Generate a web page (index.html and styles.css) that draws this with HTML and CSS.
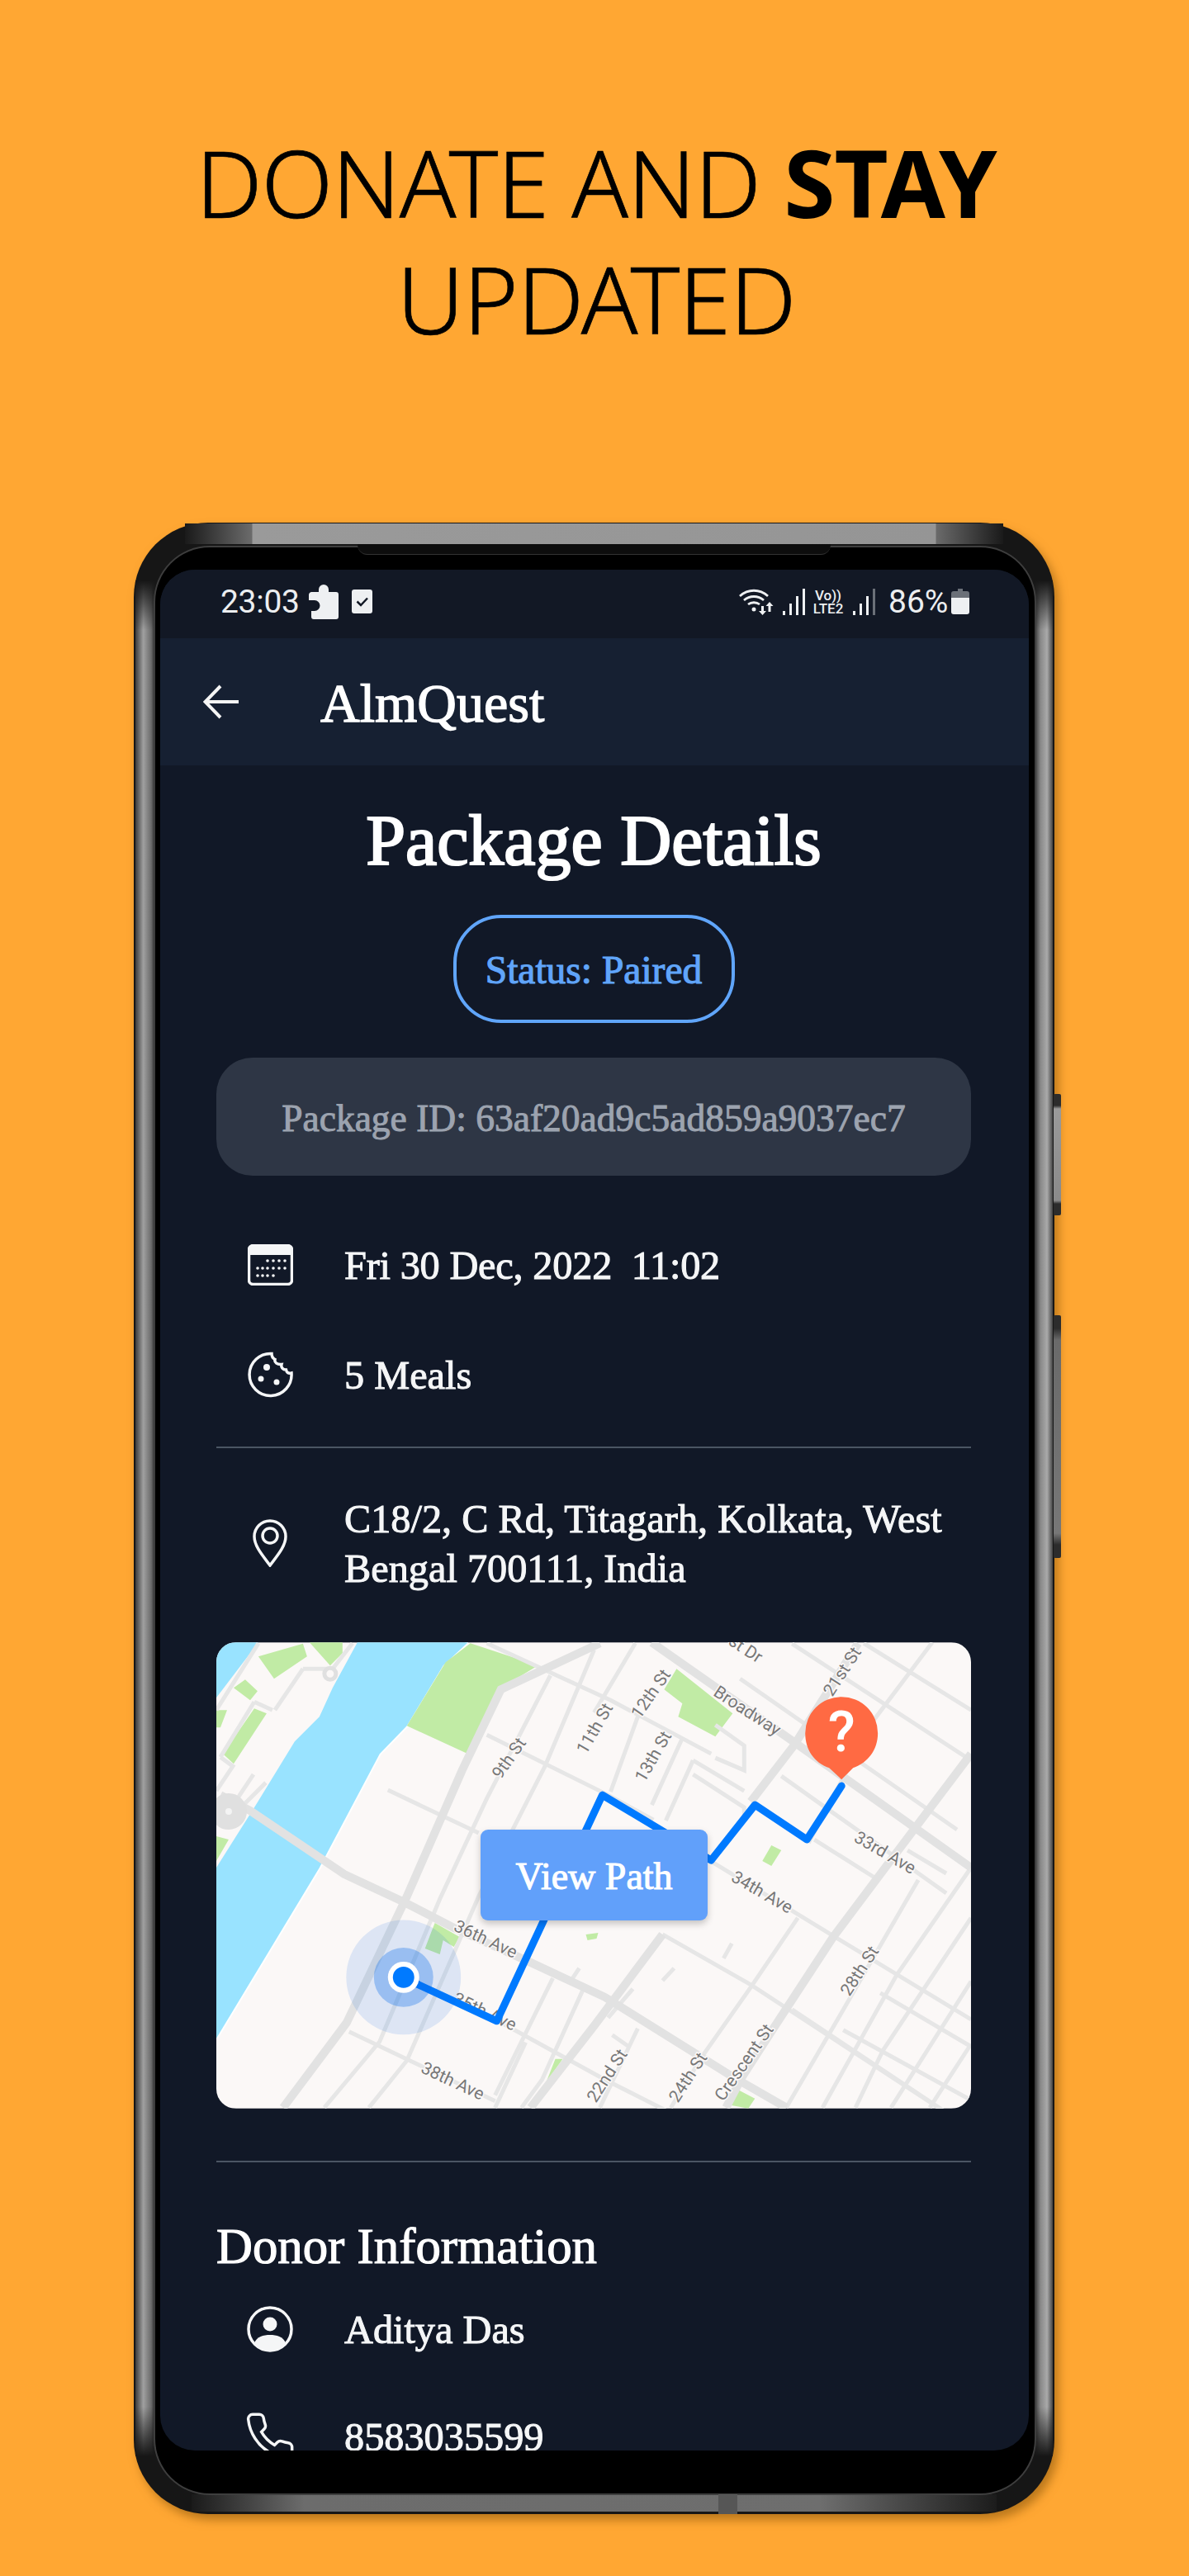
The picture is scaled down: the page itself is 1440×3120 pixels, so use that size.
FILE: index.html
```html
<!DOCTYPE html>
<html lang="en">
<head>
<meta charset="utf-8">
<title>AlmQuest</title>
<link rel="stylesheet" href="styles.css">
</head>
<body>
<header class="hero">
  <h1 class="hero-title">DONATE AND <b>STAY</b><br>UPDATED</h1>
</header>
<div class="phone">
  <span class="band band-top"></span>
  <span class="band band-bottom"></span>
  <span class="band band-left"></span>
  <span class="band band-right"></span>
  <span class="speaker"></span>
  <span class="port"></span>
  <span class="key key-a"></span>
  <span class="key key-b"></span>
  <div class="bezel">
    <div class="screen">
      <div class="statusbar">
        <span class="time">23:03</span>
        <svg class="st-puzzle" viewBox="0 0 36 43"><path d="M3 10H12V7a6 6 0 0 1 12 0V10H33a3 3 0 0 1 3 3V40a3 3 0 0 1-3 3H6a3 3 0 0 1-3-3V33H7a6.500 6.500 0 0 0 0-13H0V14a4 4 0 0 1 3-4z"/></svg>
        <svg class="st-check" viewBox="0 0 25 29"><path d="M3 0H22a3 3 0 0 1 3 3V26a3 3 0 0 1-3 3H3a3 3 0 0 1-3-3V3a3 3 0 0 1 3-3z"/><path class="st-tick" d="M6.500 14.500l4.500 4.500 8-8.500"/></svg>
        <span class="grow"></span>
        <svg class="st-wifi" viewBox="0 0 43 32"><path class="st-line" d="M1 9C11 0 25 0 35 9M6 14C13 8 23 8 30 14M11 19c4-3 10-3 14 0"/><circle class="st-fill" cx="18" cy="25" r="2.500"/><path class="st-fill" d="M27 21h3v6h3l-4.500 5-4.500-5h3zM37 16l4.500 5h-3v7h-3v-7h-3z"/></svg>
        <svg class="st-signal" viewBox="0 0 27 32"><path d="M0 27h3v5H0zM8 18h3v14H8zM16 9h3v23h-3zM24 0h3v32h-3z"/></svg>
        <span class="st-lte"><span>Vo))</span><span>LTE2</span></span>
        <svg class="st-signal st-signal-b" viewBox="0 0 27 32"><path d="M0 27h3v5H0zM8 18h3v14H8zM16 9h3v23h-3z"/><path class="st-dim" d="M24 0h3v32h-3z"/></svg>
        <span class="pct">86%</span>
        <svg class="st-batt" viewBox="0 0 22 31"><path class="st-dim" d="M8 0h6v3h5a3 3 0 0 1 3 3v5H0V6a3 3 0 0 1 3-3h5z"/><path d="M0 11H22V28a3 3 0 0 1-3 3H3a3 3 0 0 1-3-3z"/></svg>
      </div>
      <div class="appbar">
        <svg class="back" viewBox="0 0 44 44"><path d="M43 22H3M21 3L2.500 22 21 41"/></svg>
        <span class="app-title">AlmQuest</span>
      </div>
      <main class="content">
        <h2 class="page-title">Package Details</h2>
        <div class="pill">Status: Paired</div>
        <div class="package-id">Package ID: 63af20ad9c5ad859a9037ec7</div>
        <div class="rows rows-top">
          <div class="row">
            <span class="ico"><svg class="i-cal" viewBox="0 0 55 50"><rect x="1.500" y="1.500" width="52" height="47" rx="5" class="ol"/><path class="so" d="M6 1.500H49a4.500 4.500 0 0 1 4.500 4.500V13H1.500V6A4.500 4.500 0 0 1 6 1.500z"/><g class="so"><circle cx="24" cy="20" r="1.800"/><circle cx="31" cy="20" r="1.800"/><circle cx="38" cy="20" r="1.800"/><circle cx="45" cy="20" r="1.800"/><circle cx="12" cy="29" r="1.800"/><circle cx="18" cy="29" r="1.800"/><circle cx="24" cy="29" r="1.800"/><circle cx="31" cy="29" r="1.800"/><circle cx="38" cy="29" r="1.800"/><circle cx="45" cy="29" r="1.800"/><circle cx="12" cy="38" r="1.800"/><circle cx="18" cy="38" r="1.800"/><circle cx="24" cy="38" r="1.800"/><circle cx="31" cy="38" r="1.800"/></g></svg></span>
            <span class="txt txt-date">Fri 30 Dec, 2022 &nbsp;11:02</span>
          </div>
          <div class="row">
            <span class="ico"><svg class="i-cookie" viewBox="0 0 56 56"><path class="ol" d="M30 2.500a25.500 25.500 0 1 0 24 23.500c-4 1-6-1-6.500-4-4 0-6.500-3-5.500-6.500-5 .5-9-2-8-6-2-1-4-3-4-7z"/><g class="so"><circle cx="24" cy="19" r="4"/><circle cx="17" cy="33" r="3.500"/><circle cx="36" cy="37" r="3.500"/></g></svg></span>
            <span class="txt">5 Meals</span>
          </div>
        </div>
        <hr class="rule rule-a">
        <div class="row row-address">
          <span class="ico"><svg class="i-pin" viewBox="0 0 42 58"><path class="ol" d="M21 56C13 45 2 33 2 21a19 19 0 0 1 38 0C40 33 29 45 21 56z"/><circle class="ol" cx="21" cy="20" r="9"/></svg></span>
          <span class="txt">C18/2, C Rd, Titagarh, Kolkata, West Bengal 700111, India</span>
        </div>
        <div class="map">
          <svg class="map-art" viewBox="0 0 915 565">
            <rect class="m-land" width="915" height="565"/>
            <path class="m-edge" d="M305 0L275 28 231 101 198 135 135 254 125 273 0 480"/>
            <path class="m-water" d="M171 0H305L275 28 231 101 198 135 135 254 125 273 0 480V273L48 197 95 120 125 90 141 55zM0 67L51 0H0z"/>
            <path class="m-park" d="M51 17L105 1.500 110 17 70 44zM113 0H153V13L138 28zM21 55L35 45 50 59 41 70zM46 80L61 86 21 147 8 135zM0 82H13L5 103H0zM0 235L15 239 0 265zM308 1L390 28 345 55 305 135 231 101 278 24zM265 340L295 357 288 369 275 361 271 378 253 371 261 350zM448 354L463 352 461 359 450 361zM411 505H420L400 533zM558 32L626 86 605 114 560 90 565 74 543 57zM673 246L685 252 673 271 662 265zM630 541L653 553 645 565 618 560z"/>
            <path class="m-thin" d="M698 1.500L915 143M785 1L915 82M635 44L898 227M685 162L885 304M725 239L798 285M601 266L745 354 915 457M541 354L648 415 915 590M698 445L915 590M838 252L885 280M868 0L798 93 718 243M915 273L825 403 735 564M915 334L808 495 775 564M851 288L758 449 691 564M915 411L818 564M705 334L648 418 591 499 551 564M915 487L865 564M511 468L465 564M625 365L615 383M555 395L541 410M508 1L458 85M511 90L478 181M565 116L528 197M578 143L545 216M578 143L640 180M578 160L640 200 640 215M605 100L640 125 640 155 605 140M328 112L475 185 530 215M208 179L318 231M328 1L478 70 600 135M161 472L338 556M338 457L471 530 560 575M405 40L328 189 271 311 198 484 131 564M458 9L398 151 318 308 231 507 185 564M408 407L338 549M375 485L338 564M445 420L395 530 370 564M440 395L430 410M51 1L0 82M46 72L5 139M5 139L20 150 0 180M46 72L68 82M105 32L71 82M165 1L141 32M105 32L135 32M60 170L30 200M45 160L25 190M505 420L475 455M480 476L500 490M805 425L915 490M760 470L915 555"/>
            <path class="m-major" d="M5 185L41 204 155 281 228 315 288 346 381 388 471 430 625 526 691 564M465 1L345 57 298 155 231 308 158 461 81 564M528 0L705 124 915 273M778 1L701 124 648 193M541 354L458 465 381 564M915 135L811 273 748 357 678 464 638 526 618 564"/>
            <circle class="m-ring-road" cx="15" cy="205" r="13"/>
            <circle class="m-ring-thin" cx="138" cy="38" r="7"/>
            <g class="m-labels">
              <text transform="translate(356 141) rotate(-55)">9th St</text>
              <text transform="translate(460 105) rotate(-60)">11th St</text>
              <text transform="translate(528 63) rotate(-55)">12th St</text>
              <text transform="translate(531 139) rotate(-60)">13th St</text>
              <text transform="translate(643 84) rotate(33)">Broadway</text>
              <text transform="translate(641 9) rotate(33)">st Dr</text>
              <text transform="translate(760 36) rotate(-57)">21st St</text>
              <text transform="translate(810 256) rotate(30)">33rd Ave</text>
              <text transform="translate(661 304) rotate(30)">34th Ave</text>
              <text transform="translate(326 361) rotate(25)">36th Ave</text>
              <text transform="translate(325 449) rotate(25)">35th Ave</text>
              <text transform="translate(781 399) rotate(-57)">28th St</text>
              <text transform="translate(286 533) rotate(25)">38th Ave</text>
              <text transform="translate(475 526) rotate(-57)">22nd St</text>
              <text transform="translate(573 528) rotate(-57)">24th St</text>
              <text transform="translate(641 510) rotate(-55)">Crescent St</text>
            </g>
            <path class="m-route" d="M228 407L340 459 468 185 600 264 653 197 716 239 758 174"/>
            <circle class="m-halo" cx="227" cy="406" r="69.500"/>
            <circle class="m-halo-b" cx="227" cy="406" r="36"/>
            <circle class="m-dot-w" cx="227" cy="406" r="19"/>
            <circle class="m-dot" cx="227" cy="406" r="13"/>
            <path class="m-pin" d="M758 166L743 152C725 146 714 130 714 110a44 44 0 0 1 88 0C802 130 790 146 772 152z"/>
            <text class="m-q" x="758" y="132">?</text>
          </svg>
          <button class="view-path">View Path</button>
        </div>
        <hr class="rule rule-b">
        <h3 class="section-title">Donor Information</h3>
        <div class="rows rows-donor">
          <div class="row">
            <span class="ico"><svg class="i-user" viewBox="0 0 56 56"><circle class="ol" cx="28" cy="28" r="26"/><circle class="so" cx="28" cy="22" r="8.500"/><path class="so" d="M9 45c3-8 11-10 19-10s16 2 19 10c-5 6-12 9-19 9S14 51 9 45z"/></svg></span>
            <span class="txt">Aditya Das</span>
          </div>
          <div class="row">
            <span class="ico"><svg class="i-phone" viewBox="0 0 24 24"><path class="ol-p" d="M22 16.920v3a2 2 0 0 1-2.180 2 19.790 19.790 0 0 1-8.630-3.070 19.500 19.500 0 0 1-6-6 19.790 19.790 0 0 1-3.070-8.670A2 2 0 0 1 4.110 2h3a2 2 0 0 1 2 1.720 12.840 12.840 0 0 0 .7 2.810 2 2 0 0 1-.45 2.110L8.090 9.910a16 16 0 0 0 6 6l1.270-1.270a2 2 0 0 1 2.110-.45 12.840 12.840 0 0 0 2.810.7A2 2 0 0 1 22 16.920z"/></svg></span>
            <span class="txt">8583035599</span>
          </div>
        </div>
      </main>
    </div>
  </div>
</div>
</body>
</html>
```

FILE: styles.css
```css
* { box-sizing: border-box; }
html, body { margin: 0; padding: 0; }
body {
  width: 1440px;
  height: 3120px;
  overflow: hidden;
  background: #ffa733;
  font-family: "Liberation Serif", serif;
  color: #f3f4f6;
}

/* hero */
.hero { padding: 150px 0 0 4px; height: 633px; }
.hero-title {
  margin: 0;
  font-family: "Noto Sans", "Open Sans", sans-serif;
  font-weight: 300;
  font-size: 113px;
  line-height: 141px;
  letter-spacing: -1px;
  text-align: center;
  color: #000;
  -webkit-text-stroke: .7px #000;
}
.hero-title b { font-weight: 700; -webkit-text-stroke: 0; }

/* device */
.phone {
  position: relative;
  width: 1115px;
  height: 2412px;
  margin-left: 162px;
  padding: 30px 24px 25px 26px;
  border-radius: 90px;
  background: #161616;
  box-shadow: 5px 7px 12px rgba(130, 80, 10, .55);
}
.band { position: absolute; }
.band-top {
  top: 1px; left: 62px; right: 62px; height: 25px;
  background: linear-gradient(90deg, #1a1a1a 0, #6a6a6a 80px, #6a6a6a 81px, #9a9a9a 82px, #959595 calc(100% - 82px), #6a6a6a calc(100% - 81px), #1a1a1a 100%);
}
.band-bottom {
  bottom: 3px; left: 70px; right: 70px; height: 21px;
  background: linear-gradient(90deg, #1a1a1a, #6c6c6c 14%, #6e6e6e 78%, #1c1c1c);
}
.band-left {
  top: 70px; bottom: 70px; left: 2px; width: 24px;
  background:
    linear-gradient(180deg, #161616 0, rgba(22, 22, 22, 0) 60px, rgba(22, 22, 22, 0) calc(100% - 60px), #161616 100%),
    linear-gradient(90deg, #3c3c3c, #a0a0a0 40%, #6b6b6b 80%, #222);
}
.band-right {
  top: 70px; bottom: 70px; right: 2px; width: 23px;
  background:
    linear-gradient(180deg, #161616 0, rgba(22, 22, 22, 0) 60px, rgba(22, 22, 22, 0) calc(100% - 60px), #161616 100%),
    linear-gradient(90deg, #2a2a2a, #888 35%, #aaa 70%, #444);
}
.speaker {
  position: absolute; z-index: 2;
  top: 26px; left: 271px; width: 573px; height: 13px;
  background: #0d0d0d;
  border-bottom: 1px solid #333;
  border-radius: 0 0 12px 12px;
}
.port {
  position: absolute; z-index: 2;
  bottom: 0; left: 708px; width: 23px; height: 24px;
  background: #565656;
}
.key {
  position: absolute;
  right: -8px; width: 9px;
  border-radius: 2px;
  background: linear-gradient(180deg, #2c2c2c 0, #2c2c2c 14px, #9a9a9a 18px, #8a8a8a calc(100% - 18px), #2c2c2c calc(100% - 14px));
}
.key-a { top: 692px; height: 147px; }
.key-b { top: 960px; height: 294px; background: linear-gradient(180deg, #2c2c2c 0, #2c2c2c 16px, #6a6a6a 30px, #777 calc(100% - 30px), #2c2c2c calc(100% - 16px)); }
.bezel {
  position: relative; z-index: 1;
  height: 100%;
  padding: 27px 7px 52px 6px;
  background: #000;
  border-radius: 66px;
  box-shadow: 0 0 0 2px #3e3e3e;
}
.screen {
  height: 100%;
  overflow: hidden;
  border-radius: 42px;
  background: #111827;
}

/* status bar */
.statusbar {
  display: flex;
  align-items: center;
  height: 83px;
  padding: 0 72px 6px 73px;
  background: #121825;
  font-family: Roboto, "Liberation Sans", sans-serif;
  color: #eceef0;
}
.grow { flex: 1; }
.time { font-size: 39px; font-weight: 400; width: 94px; letter-spacing: -.3px; }
.st-puzzle { width: 36px; height: 43px; margin-left: 13px; fill: #eef0f2; }
.st-check { width: 25px; height: 29px; margin-left: 16px; fill: #eef0f2; }
.st-tick { fill: none; stroke: #121825; stroke-width: 2.500; }
.st-wifi { width: 43px; height: 32px; }
.st-line { fill: none; stroke: #eef0f2; stroke-width: 2.800; }
.st-fill { fill: #eef0f2; }
.st-signal { width: 27px; height: 32px; margin-left: 10px; fill: #eef0f2; }
.st-signal-b { margin-left: 9px; }
.st-dim { fill: #6b7078; }
.st-lte {
  display: flex; flex-direction: column; align-items: center;
  width: 42px; margin-left: 7px;
  font-size: 17px; line-height: 16px; font-weight: 500;
}
.pct { font-size: 39px; font-weight: 400; margin-left: 16px; width: 73px; }
.st-batt { width: 22px; height: 31px; margin-left: 3px; fill: #eef0f2; }

/* app bar */
.appbar {
  display: flex;
  align-items: center;
  height: 154px;
  padding-left: 52px;
  background: #162032;
}
.back { width: 44px; height: 44px; fill: none; stroke: #f5f5f5; stroke-width: 4; }
.app-title {
  margin-left: 98px;
  padding-top: 4px;
  font-size: 66px;
  color: #fff;
  -webkit-text-stroke: 1.300px #fff;
}

/* content */
.content { display: flex; flex-direction: column; padding: 41px 70px 0 68px; }
.page-title {
  margin: 0;
  height: 100px;
  font-size: 86px;
  line-height: 100px;
  font-weight: 400;
  text-align: center;
  color: #fff;
  -webkit-text-stroke: 2.200px #fff;
}
.pill {
  align-self: center;
  display: flex;
  align-items: center;
  justify-content: center;
  width: 341px;
  height: 131px;
  margin-top: 40px;
  padding-top: 3px;
  border: 4px solid #60a5fa;
  border-radius: 58px;
  font-size: 47.500px;
  color: #60a5fa;
  -webkit-text-stroke: 1.100px #60a5fa;
}
.package-id {
  display: flex;
  align-items: center;
  justify-content: center;
  height: 143px;
  margin-top: 42px;
  padding-top: 3px;
  border-radius: 44px;
  background: #2e3645;
  font-size: 45.500px;
  color: #9ca3af;
  -webkit-text-stroke: 1px #9ca3af;
}
.rows { display: flex; flex-direction: column; gap: 33px; }
.rows-top { margin-top: 58px; }
.rows-donor { margin-top: 12px; gap: 30px; }
.row { display: flex; align-items: center; height: 100px; }
.ico { display: flex; justify-content: center; flex: none; width: 130px; margin-right: 25px; }
.txt {
  padding-top: 2px;
  font-size: 48.300px;
  line-height: 60px;
  color: #f5f6f7;
  -webkit-text-stroke: 1px #f5f6f7;
}
.txt-date { letter-spacing: -.2px; }
.ol { fill: none; stroke: #f5f6f7; stroke-width: 3.500; }
.ol-p { fill: none; stroke: #f5f6f7; stroke-width: 1.300; }
.so { fill: #f5f6f7; }
.i-cal { width: 55px; height: 50px; }
.i-cookie { width: 56px; height: 56px; }
.i-pin { width: 42px; height: 58px; }
.i-user { width: 56px; height: 56px; }
.i-phone { width: 64px; height: 64px; }
.rule { width: 100%; height: 2px; margin: 0; border: 0; background: #4b5563; }
.rule-a { margin-top: 37px; }
.rule-b { margin-top: 63px; }
.row-address { height: 120px; margin-top: 55px; }
.section-title {
  margin: 60px 0 0;
  height: 80px;
  padding-top: 2px;
  font-size: 60.800px;
  line-height: 80px;
  font-weight: 400;
  color: #fff;
  -webkit-text-stroke: 1.200px #fff;
}

/* map */
.map {
  position: relative;
  height: 565px;
  margin-top: 60px;
  overflow: hidden;
  border-radius: 24px;
}
.map-art { display: block; width: 100%; height: 100%; }
.m-land { fill: #fbf8f7; }
.m-water { fill: #99e3ff; }
.m-edge { fill: none; stroke: #fff; stroke-width: 4; }
.m-park { fill: #c1eba5; }
.m-thin { fill: none; stroke: #e6e6e6; stroke-width: 5; }
.m-major { fill: none; stroke: #e2e2e2; stroke-width: 10; }
.m-ring-road { fill: #f4f4f4; stroke: #e0e0e0; stroke-width: 18; }
.m-ring-thin { fill: #fbf8f7; stroke: #e0e0e0; stroke-width: 5; }
.m-labels text {
  font-family: Roboto, "Liberation Sans", sans-serif;
  font-size: 21px;
  fill: #777;
  text-anchor: middle;
  dominant-baseline: middle;
  paint-order: stroke;
  stroke: #fbf8f7;
  stroke-width: 3px;
}
.m-route { fill: none; stroke: #007aff; stroke-width: 9; stroke-linejoin: round; stroke-linecap: round; }
.m-halo { fill: rgba(10, 100, 220, .12); }
.m-halo-b { fill: rgba(10, 110, 235, .32); }
.m-dot-w { fill: #fff; }
.m-dot { fill: #007aff; }
.m-pin { fill: #ff6a43; }
.m-q {
  font-family: Roboto, "Liberation Sans", sans-serif;
  font-size: 68px;
  font-weight: 500;
  fill: #fff;
  text-anchor: middle;
}
.view-path {
  position: absolute;
  left: 320px;
  top: 227px;
  width: 275px;
  height: 110px;
  padding-top: 3px;
  border: 0;
  border-radius: 9px;
  background: #61a0fa;
  box-shadow: 0 4px 8px rgba(0, 0, 0, .22);
  font-family: "Liberation Serif", serif;
  font-size: 46px;
  color: #fff;
  -webkit-text-stroke: 1.100px #fff;
}
```
